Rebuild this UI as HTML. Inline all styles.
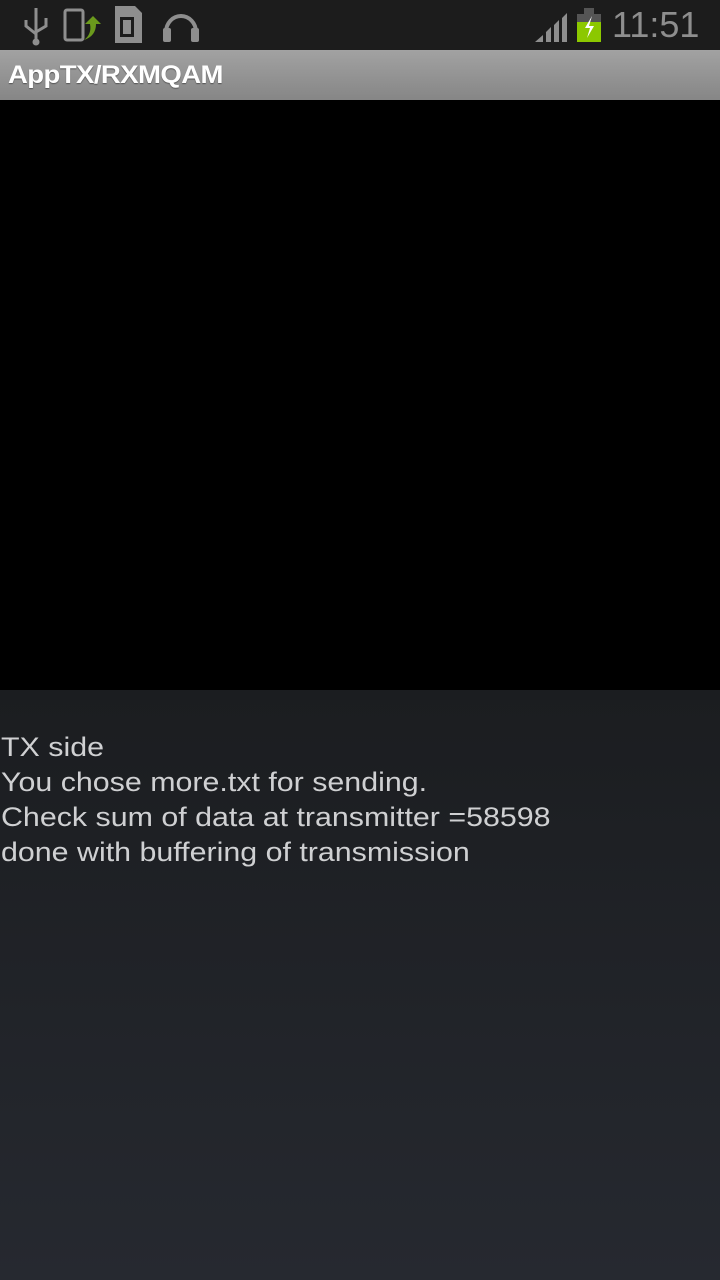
<!DOCTYPE html>
<html><head><meta charset="utf-8"><style>
html,body{margin:0;padding:0;width:720px;height:1280px;overflow:hidden;font-family:"Liberation Sans",sans-serif}
#sb{position:absolute;left:0;top:0;width:720px;height:50px;background:#1c1c1c}
#tb{position:absolute;left:0;top:50px;width:720px;height:50px;background:linear-gradient(#a2a2a2,#868686)}
#tb span{position:absolute;left:8px;top:11px;font-size:25px;font-weight:bold;color:#fff;letter-spacing:-0.5px;text-shadow:0 1px 1px #555;transform:scaleX(1.1);transform-origin:0 0;white-space:nowrap}
#blk{position:absolute;left:0;top:100px;width:720px;height:590px;background:#000}
#bot{position:absolute;left:0;top:690px;width:720px;height:590px;background:linear-gradient(#1b1d20,#262930)}
#txt{position:absolute;left:1px;top:40px;color:#cfd0d2;font-size:27px;line-height:35px;transform:scaleX(1.125);transform-origin:0 0;white-space:nowrap}
#time{position:absolute;left:612px;top:4px;font-size:36px;color:#8e8e8e}
</style></head><body>
<div id="sb">
<svg width="720" height="50" style="position:absolute;left:0;top:0">
<g fill="#8e8e8e" stroke="#8e8e8e">
<line x1="36" y1="8" x2="36" y2="42" stroke-width="3"/>
<path d="M26 20v6l10 8M46 18v8l-10 6" fill="none" stroke-width="3"/>
<circle cx="36" cy="42" r="3"/>
<rect x="65" y="10" width="18" height="30" rx="2" fill="none" stroke-width="3"/>
<path d="M115 6h20l7 7v30h-27z" stroke="none"/>
<rect x="120" y="17" width="14" height="20" fill="#1c1c1c" stroke="none"/>
<rect x="123" y="20" width="8" height="14" fill="#8e8e8e" stroke="none"/>
<path d="M166 32a15 16 0 0 1 30 0" fill="none" stroke-width="4"/>
<rect x="163" y="28" width="8" height="14" rx="2" stroke="none"/>
<rect x="191" y="28" width="8" height="14" rx="2" stroke="none"/>
<path d="M535 42l8-7v7zM546 42v-10l5-5v15zM554 42v-17l5-5v22zM562 42v-24l5-5v29z" stroke="none"/>
<rect x="577" y="14" width="24" height="28" fill="#555" stroke="none"/>
<rect x="584" y="8" width="10" height="6" fill="#555" stroke="none"/>
</g>
<path d="M84 40q8-6 6-16h-5l8-8 8 8h-5q0 12-12 16z" fill="#6b9a1c"/>
<rect x="577" y="22" width="24" height="20" fill="#8cc800"/>
<path d="M592 16l-7 12h5l-3 10 7-12h-5z" fill="#fff"/>
</svg>
<div id="time">11:51</div>
</div>
<div id="tb"><span>AppTX/RXMQAM</span></div>
<div id="blk"></div>
<div id="bot"><div id="txt">TX side<br>You chose more.txt for sending.<br>Check sum of data at transmitter =58598<br>done with buffering of transmission</div></div>
</body></html>
